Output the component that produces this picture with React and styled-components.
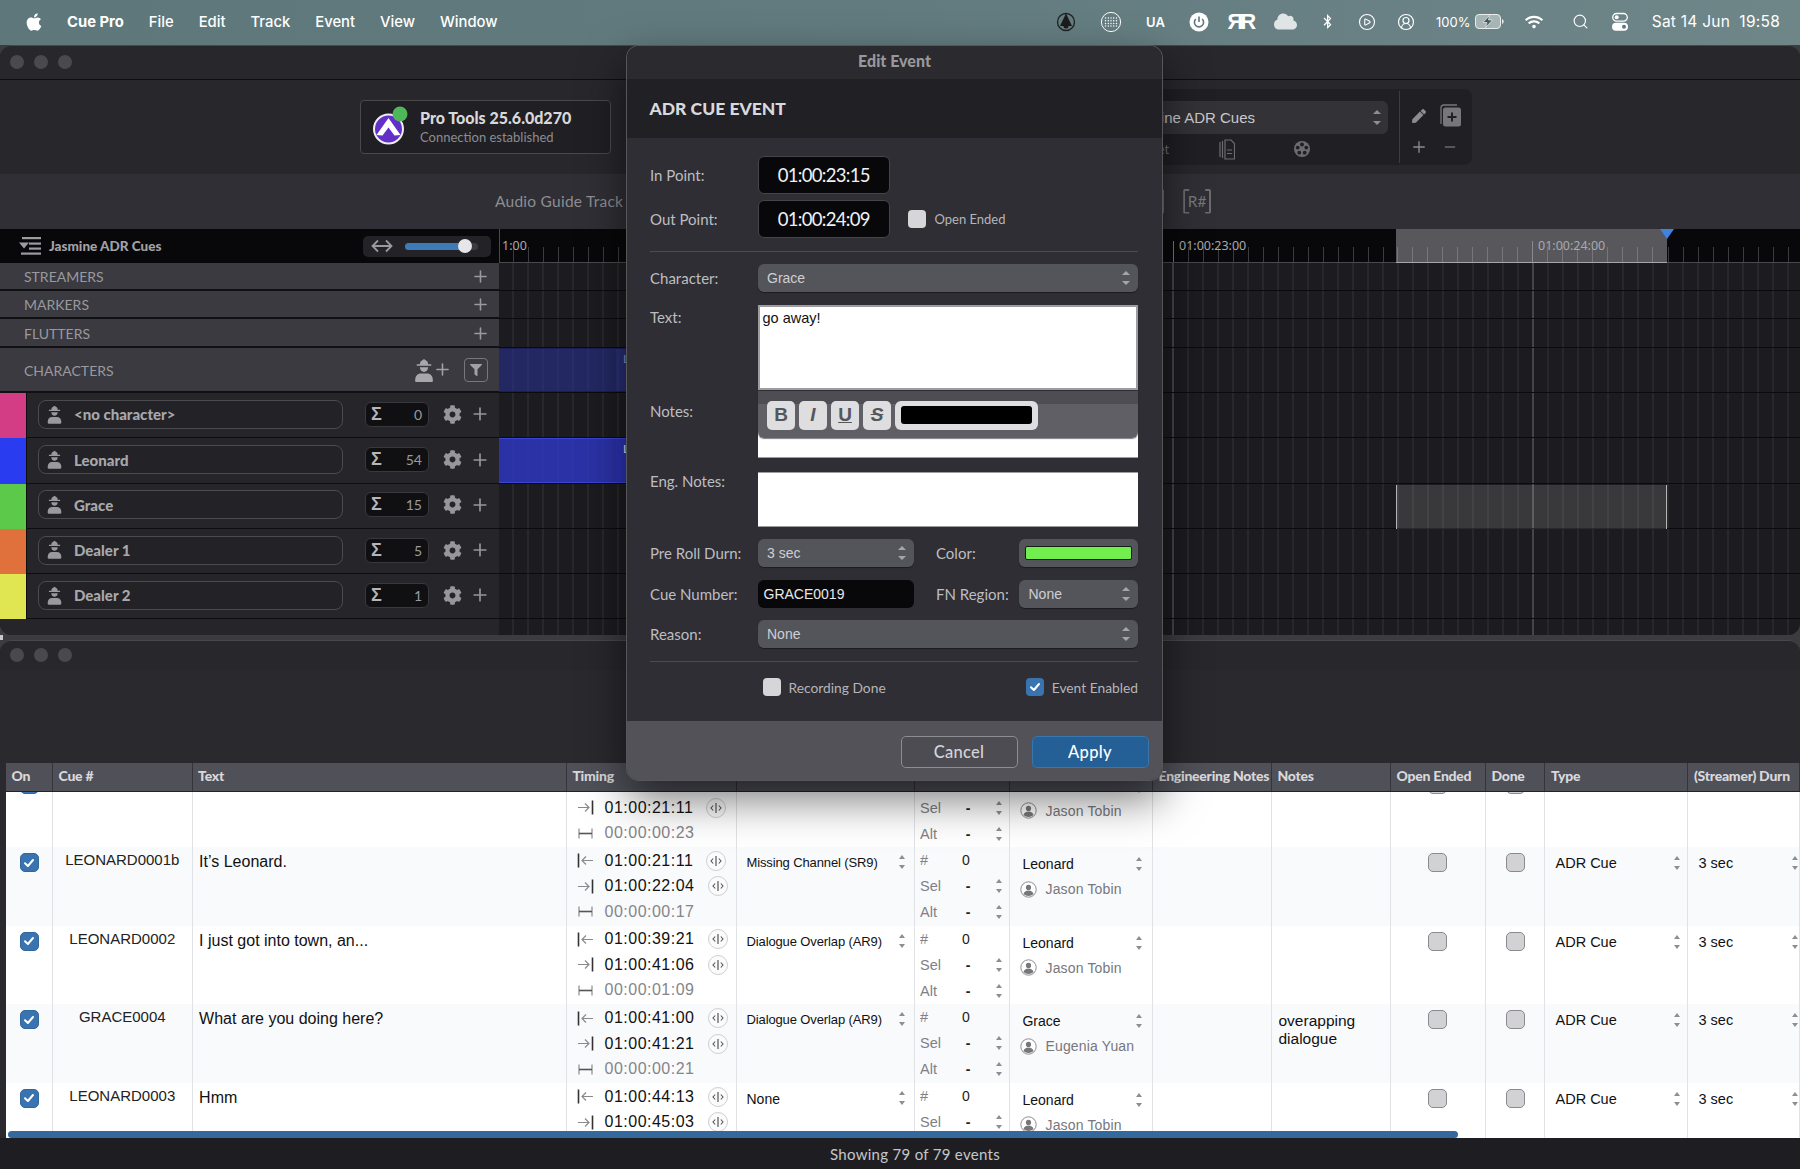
import React from 'react';
import styled, { createGlobalStyle } from 'styled-components';
import { FaApple, FaBluetoothB, FaCloud, FaCog, FaFilter, FaPen, FaWifi } from 'react-icons/fa';
import { CirclePlay, CircleUserRound, Minus, Plus, Search } from 'lucide-react';

const UI = '"Lato", "Noto Sans", sans-serif';
const SANS = '"Liberation Sans", Arial, sans-serif';
const LANES = [28, 28, 29, 45, 45, 45.5, 45, 45.5, 45];
const COLUMNS = '47px 139.6px 374.4px 170px 178px 95px 143px 119px 119px 95px 59.5px 143px 1fr';

const Global = createGlobalStyle`
  html, body { margin: 0; width: 1800px; height: 1169px; overflow: hidden; background: #3b3b40; }
  body { font-family: ${UI}; }
  * { box-sizing: border-box; }
`;

const Screen = styled.div`position: relative; width: 1800px; height: 1169px; overflow: hidden; background: #3b3b40;`;

/* ---------- Menu bar ---------- */
const MenuBar = styled.header`
  height: 45px; display: flex; align-items: center; padding: 0 20px 2px 24px; color: #fff;
  background: linear-gradient(90deg, #5d777b 0%, #627b7f 50%, #6f8689 100%);
  font: 500 14.8px "Inter", sans-serif;
`;
const MenuItems = styled.nav`display: flex; align-items: center; gap: 25px; margin-left: 23px;`;
const AppName = styled.span`font-weight: 700;`;
const Status = styled.div`margin-left: auto; display: flex; align-items: center;`;
const Slot = styled.span`
  width: ${p => p.$w}px; display: flex; justify-content: center; align-items: center;
  font-size: 13px; font-weight: 600;
`;
const Logo = styled.span`font: 700 22px ${SANS}; letter-spacing: -3px; color: #fff; padding-right: 3px;`;
const Percent = styled.span`margin-left: 10px; width: 34px; font-size: 13px; font-weight: 400;`;
const Clock = styled.span`margin-left: 6px; width: 130px; text-align: right; white-space: pre; font-size: 15.5px; letter-spacing: .25px; font-weight: 400;`;

const Ring = () => (
  <svg width="20" height="22" viewBox="0 0 20 22"><circle cx="10" cy="11" r="8.5" fill="none" stroke="#222" strokeWidth="1.3"/><path d="M10 2.500 16 15H4z" fill="#1c1c1c"/><circle cx="10" cy="15" r="2.500" fill="#1c1c1c"/></svg>
);
const DotGlobe = () => (
  <svg width="22" height="22" viewBox="0 0 22 22"><circle cx="11" cy="11" r="9.600" fill="none" stroke="#fff" strokeWidth="1"/>
    {[7, 9.7, 12.4, 15].map(y => [5.5, 8.3, 11, 13.7, 16.5].map(x => <circle key={x + '-' + y} cx={x} cy={y} r=".75" fill="#fff"/>))}
  </svg>
);
const Power = () => (
  <svg width="20" height="20" viewBox="0 0 20 20"><circle cx="10" cy="10" r="9.500" fill="#fff"/><path d="M6.800 7a4.600 4.600 0 1 0 6.400 0M10 4.500V10" fill="none" stroke="#5f777b" strokeWidth="1.600"/></svg>
);
const Battery = () => (
  <svg width="29" height="15" viewBox="0 0 29 15" style={{ marginLeft: 5 }}><rect x=".5" y=".5" width="25" height="14" rx="3.500" fill="#d9dfdf" fillOpacity=".55" stroke="#e8ecec"/><path d="M27 5v5c1-.4 1.700-1.400 1.700-2.500S28 5.400 27 5z" fill="#e8ecec"/><path d="M14.500 1.500 8 8.500h4l-1.500 5 7-7.500h-4z" fill="#42585b" stroke="#fff" strokeWidth=".6"/></svg>
);
const Toggles = () => (
  <svg width="18" height="20" viewBox="0 0 18 20"><rect x="1.700" y="1.500" width="14.600" height="7.600" rx="3.800" fill="none" stroke="#fff" strokeWidth="1.300"/><circle cx="5.700" cy="5.300" r="2" fill="#fff"/><rect x="1" y="10.800" width="16" height="8" rx="4" fill="#fff"/><circle cx="13" cy="14.800" r="2" fill="#5f777b"/></svg>
);

/* ---------- Main window ---------- */
const MainWindow = styled.section`
  height: 590px; display: flex; flex-direction: column; overflow: hidden;
  border-radius: 12px; background: #25252a; border-top: 1px solid #48484c;
`;
const TitleBar = styled.div`
  height: ${p => p.$h}px; flex: none; display: flex; align-items: center; gap: 10px; padding: 0 0 2px 10px;
  background: #27272c; border-bottom: 1px solid ${p => p.$line};
`;
const Light = styled.i`width: 14px; height: 14px; border-radius: 50%; background: #4a4a4e;`;
const Toolbar = styled.div`height: 94px; flex: none; display: flex; align-items: center; background: #27272c;`;
const HostBox = styled.div`
  margin-left: 360px; width: 251px; height: 54px; display: flex; align-items: center; gap: 9px; padding: 0 0 2px 12px;
  background: #1f1f24; border: 1px solid #48484d; border-radius: 4px;
`;
const HostText = styled.div`display: flex; flex-direction: column; gap: 2px;`;
const HostName = styled.strong`font: 900 16px ${UI}; color: #d8d8da; white-space: nowrap;`;
const HostState = styled.span`font: 400 13px ${UI}; color: #8c8c91; white-space: nowrap;`;
const PresetPanel = styled.div`
  margin-left: auto; margin-right: 328px; width: 382px; height: 76px; display: flex;
  background: #1f1f24; border-radius: 8px;
`;
const PresetMain = styled.div`width: 310px; padding: 12px 0 0 12px; border-right: 1px solid #3d3d42; margin: 2px 0;`;
const PresetSelect = styled.div`
  position: relative; width: 286px; height: 33px; margin-top: -2px; display: flex; align-items: center; padding: 0 7px 0 23px; justify-content: space-between;
  background: #323237; border-radius: 6px; font: 15px ${SANS}; color: #c9c9cd;
`;
const PresetTools = styled.div`display: flex; align-items: center; height: 30px; padding-left: 31px; color: #6c6c70; font: 13px ${UI};`;
const PresetIcon = styled.span`display: flex; margin-left: ${p => p.$m}px;`;
const PresetActions = styled.div`
  display: grid; grid-template-columns: 31px 31px; grid-auto-rows: 31px; padding: 11px 0 0 3px;
  place-items: center; color: #8b8b90;
`;
const Band = styled.div`height: 55px; flex: none; display: flex; align-items: center; background: #2f2f35; padding-bottom: 1px;`;
const GuideLabel = styled.span`margin-left: 495px; font: 15.5px ${UI}; letter-spacing: .25px; color: #8d8d92; white-space: nowrap;`;
const BracketButton = styled.div`
  margin-left: ${p => p.$m}px; width: ${p => p.$w}px; height: 25px; display: flex; align-items: center; justify-content: center;
  border: 2px solid #6b6b70; border-radius: 2px; position: relative; color: #77777b; font: 15.5px ${UI};
  clip-path: polygon(0 0, 6px 0, 6px 3px, calc(100% - 6px) 3px, calc(100% - 6px) 0, 100% 0, 100% 100%, calc(100% - 6px) 100%, calc(100% - 6px) calc(100% - 3px), 6px calc(100% - 3px), 6px 100%, 0 100%);
`;
const Workspace = styled.div`flex: 1; display: flex; min-height: 0;`;
const Sidebar = styled.div`width: 499px; flex: none; display: flex; flex-direction: column; background: #25252a;`;
const SideHeader = styled.div`
  height: 34px; flex: none; display: flex; align-items: center; padding-left: 19px; background: #08080a;
  font: 900 13.5px ${UI}; color: #a2a2a6;
`;
const SideTitle = styled.span`margin-left: 8px;`;
const Zoomer = styled.div`
  margin-left: auto; margin-right: 8px; width: 128px; height: 21px; display: flex; align-items: center; padding-left: 8px;
  background: #232327; border-radius: 5px; color: #9a9a9e;
`;
const ZoomTrack = styled.div`position: relative; margin-left: 12px; width: 73px; height: 7px; border-radius: 4px; background: #3a3a3f;`;
const ZoomFill = styled.div`width: 60px; height: 100%; border-radius: 4px; background: #3d7ab8;`;
const ZoomThumb = styled.i`position: absolute; left: 53px; top: -3.5px; width: 14px; height: 14px; border-radius: 50%; background: #e6e6e8;`;
const SectionRow = styled.div`
  height: ${p => p.$h}px; flex: none; display: flex; align-items: center; justify-content: space-between; padding: 1px 9px 0 24px;
  background: #3a3a40; border-bottom: 2px solid #111114; font: 14px ${UI}; color: #99999e;
`;
const SectionTools = styled.div`display: flex; align-items: center; gap: 12px; color: #a0a0a5; padding-right: 2px;`;
const AddPerson = styled.div`display: flex; align-items: center;`;
const FilterBox = styled.div`width: 24px; height: 24px; display: flex; align-items: center; justify-content: center; border: 1.5px solid #77777b; border-radius: 4px;`;
const CharRow = styled.div`height: ${p => p.$h}px; flex: none; display: flex; align-items: center; background: #25252a; border-bottom: 1.5px solid #0e0e10; padding-bottom: 1.5px;`;
const Swatch = styled.div`align-self: stretch; width: 27px; margin: 0 0 -3px; flex: none; background: ${p => p.$c}; border-right: 1px solid #0e0e10;`;
const NamePill = styled.div`
  margin-left: 11px; width: 305px; height: 29px; display: flex; align-items: center; gap: 11px; padding-left: 7px;
  border: 1.5px solid #4b4b50; border-radius: 8px; background: #222227; font: 900 15px ${UI}; color: #a8a8ab;
`;
const CountBox = styled.div`
  margin-left: 22px; width: 64px; height: 25px; display: flex; align-items: center; justify-content: space-between; padding: 0 6px 0 5px;
  background: #101013; border: 1.5px solid #38383d; border-radius: 6px; font: 14px ${UI}; color: #9a9a9e;
`;
const Sigma = styled.b`font: 700 18px ${SANS}; color: #b5b5b8;`;
const RowTools = styled.div`display: flex; align-items: center; margin-left: 14px; gap: 8px; color: #97979b;`;
const SideFill = styled.div`flex: 1; background: #25252a;`;

const Timeline = styled.div`flex: 1; position: relative; min-width: 0; background: #1c1c20;`;
const Ruler = styled.div`
  position: relative; height: 34px; background-color: #08080a; border-bottom: 1px solid #4a4a4e; border-left: 1px solid #4a4a4e;
  background-image:
    linear-gradient(90deg, #77777c 1px, transparent 1px),
    linear-gradient(90deg, #3c3c40 1px, transparent 1px);
  background-size: 360px 21px, 15px 15px;
  background-position: 313px bottom, 13px bottom;
  background-repeat: repeat-x;
`;
const RulerMark = styled.span`position: absolute; left: ${p => p.$x}px; top: 9px; font: 12.5px "Noto Sans", sans-serif; line-height: 16px; color: #a9a9ad; white-space: nowrap;`;
const RulerRange = styled.div`
  position: absolute; left: 896px; width: 271px; top: 0; bottom: -1px; background-color: #58585c; border-bottom: 1px solid #a8a8aa;
  background-image: linear-gradient(90deg, #8a8a8d 1px, transparent 1px), linear-gradient(90deg, #77777a 1px, transparent 1px);
  background-size: 360px 21px, 15px 15px; background-position: 136px bottom, 1px bottom; background-repeat: repeat-x;
`;
const RulerCaret = styled.i`position: absolute; left: 1160px; top: 0; width: 0; height: 0; border: 7px solid transparent; border-top: 10px solid #3f82e0; border-bottom: 0;`;
const Lanes = styled.div`
  position: relative; height: 374px;
  background-image:
    linear-gradient(90deg, rgba(255,255,255,.27) 1px, transparent 1px),
    linear-gradient(90deg, rgba(255,255,255,.1) 1px, transparent 1px);
  background-size: 360px 100%, 15px 100%;
  background-position: 313.5px 0, 13.5px 0;
`;
const Lane = styled.div`position: relative; height: ${p => p.$h}px; border-bottom: 1.5px solid #0b0b0d;`;
const Clip = styled.div`
  position: absolute; left: 0; width: 117px; top: 0; bottom: 0; background: ${p => p.$c};
  border-top: 1.5px solid ${p => p.$edge}; border-bottom: 1.5px solid ${p => p.$edge};
`;
const NextClip = styled.div`
  position: absolute; left: 117px; width: 300px; top: 0; bottom: 0; padding: 2px 0 0 7px; background: ${p => p.$c};
  border-top: 1.5px solid ${p => p.$edge}; border-bottom: 1.5px solid ${p => p.$edge};
  font: 12px ${UI}; color: ${p => p.$ink}; white-space: nowrap;
`;
const RangeBlock = styled.div`
  position: absolute; left: 897px; width: 271px; top: 1px; bottom: -1px; background: rgba(255,255,255,.13);
  border-left: 1px solid #b5b5b8; border-right: 1px solid #b5b5b8;
`;
const LaneFoot = styled.div`height: 18px;`;

/* ---------- Cue list window ---------- */
const Seam = styled.div`height: 5px; background: linear-gradient(90deg, #c9c9cc 0 3px, #3b3b40 3px);`;
const ListWindow = styled.section`
  height: 529px; display: flex; flex-direction: column; overflow: hidden;
  border-radius: 12px 12px 0 0; background: #29292e; border-top: 1px solid #48484c;
`;
const ListGap = styled.div`height: 92px; flex: none; background: #29292e;`;
const TableFrame = styled.div`flex: 1; min-height: 0; margin-left: 6px; position: relative; display: flex; flex-direction: column; background: #fff;`;
const HeadRow = styled.div`
  height: 29px; flex: none; display: grid; grid-template-columns: ${COLUMNS};
  background: #4f5058; border-bottom: 1.5px solid #232327;
`;
const HeadCell = styled.div`
  padding-left: 5.5px; border-right: 1px solid #34343a; font: 900 14px ${UI}; letter-spacing: -.25px; line-height: 26px;
  color: #d8d8dc; white-space: nowrap; overflow: hidden;
`;
const TableBody = styled.div`flex: 1; min-height: 0; overflow: hidden;`;
const TableRows = styled.div`margin-top: -23.5px;`;
const Row = styled.div`height: 78.6px; display: grid; grid-template-columns: ${COLUMNS}; background: ${p => p.$alt ? '#f9fafc' : '#fff'};`;
const Cell = styled.div`
  position: relative; border-right: 1px solid #e1e2e6; color: #111; min-width: 0;
  font: 14px ${SANS}; display: ${p => p.$center ? 'flex' : 'block'}; justify-content: center;
`;
const Box = styled.div`
  width: 19px; height: 19px; flex: none; margin-top: 6px; border-radius: 5px; display: flex; align-items: center; justify-content: center;
  background: ${p => p.$on ? '#3a74b0' : '#d2d2d4'}; border: 1px solid ${p => p.$on ? '#32679c' : '#8b8b8f'};
`;
const CueNumber = styled.div`font-size: 15px; line-height: 18px; padding-top: 4px; text-align: center; color: #222;`;
const CueText = styled.div`font-size: 16px; line-height: 18px; padding: 6px 0 0 6.5px; color: #111;`;
const TimeRow = styled.div`height: 25.5px; display: flex; align-items: center; padding-left: 10px; &:first-child { margin-top: 1px; }`;
const TimeValue = styled.span`margin-left: 10.5px; font: 16px ${SANS}; letter-spacing: .5px; color: ${p => p.$dim ? '#85858a' : '#111'};`;
const Nudge = styled.span`
  margin-left: 13px; width: 20px; height: 20px; flex: none; border-radius: 50%; border: 1px solid #cfcfd3; display: flex; align-items: center; justify-content: center; background: #fbfbfc;
`;
const Select = styled.div`display: flex; align-items: flex-start; justify-content: space-between; padding: ${p => p.$pad};`;
const ReasonText = styled.span`font-size: ${p => p.$fit ? 13 : 14}px; letter-spacing: ${p => p.$fit ? '-.12px' : 0}; line-height: 18px; color: #111; white-space: nowrap;`;
const SelectText = styled.span`font-size: 14.5px; line-height: 18px; color: #111; white-space: nowrap;`;
const TakeRow = styled.div`height: 26px; display: flex; align-items: center; padding: 0 6px 0 5px;`;
const TakeLabel = styled.span`width: 42px; color: #808086; font-size: 14.5px;`;
const TakeValue = styled.span`color: #222; font-size: 14px; font-weight: ${p => p.$bold ? 700 : 400};`;
const TakeStep = styled.span`margin-left: auto; display: flex;`;
const CharName = styled.div`display: flex; justify-content: space-between; align-items: center; height: 20px; margin-top: 7px; padding: 0 8.5px 0 12.5px; font-size: 14px; color: #111;`;
const Actor = styled.div`display: flex; align-items: center; gap: 8px; height: 20px; margin-top: 5px; padding-left: 10.5px; color: #77777c; font-size: 14px; letter-spacing: .15px; white-space: nowrap;`;
const Note = styled.div`font-size: 15.5px; line-height: 17.5px; padding: 8px 6px 0 6.5px; color: #111;`;
const Updown = styled.span`
  display: inline-flex; flex: none; flex-direction: column; justify-content: space-between; width: ${p => p.$w ?? 7}px; height: ${p => p.$h ?? 14}px; margin-top: ${p => p.$t ?? 0}px;
  &::before, &::after { content: ''; width: 0; height: 0; border-left: ${p => (p.$w ?? 7) / 2}px solid transparent; border-right: ${p => (p.$w ?? 7) / 2}px solid transparent; }
  &::before { border-bottom: 4.5px solid ${p => p.$c ?? '#8e8e92'}; }
  &::after { border-top: 4.5px solid ${p => p.$c ?? '#8e8e92'}; }
`;
const Scrollbar = styled.div`position: absolute; left: 2px; bottom: .5px; width: 1450px; height: 7px; border-radius: 4px; background: #34699e;`;
const StatusBar = styled.div`
  height: 31px; flex: none; display: flex; align-items: center; justify-content: center; padding-left: 30px; background: #1e1e22;
  font: 15px ${UI}; letter-spacing: .3px; color: #c6c6ca;
`;

/* ---------- Dialog ---------- */
const Dialog = styled.aside`
  position: absolute; left: 627px; top: 46px; width: 535px; height: 734px; display: flex; flex-direction: column; overflow: hidden;
  border-radius: 12px; background: #2e2e34;
  box-shadow: 0 0 0 1px #56565b, 0 18px 45px rgba(0,0,0,.55);
  font: 15px ${UI}; color: #bdbdc1;
`;
const DialogTitle = styled.div`height: 33px; flex: none; display: flex; align-items: center; justify-content: center; padding-bottom: 4px; background: #2a2a2f; font: 900 16px ${UI}; color: #98989c;`;
const DialogHead = styled.div`height: 59px; flex: none; display: flex; align-items: center; padding-left: 22.5px; background: #202025; font: 900 17.5px ${UI}; color: #d9d9db;`;
const DialogBody = styled.div`flex: 1; padding: 18px 24px 0 23px; display: flex; flex-direction: column;`;
const FormRow = styled.div`display: flex; align-items: ${p => p.$align ?? 'center'}; margin-top: ${p => p.$m ?? 0}px;`;
const FormLabel = styled.label`width: 107.5px; flex: none; padding-top: ${p => p.$pad ?? 0}px; white-space: nowrap; color: #bdbdc1;`;
const Timecode = styled.div`
  width: 132.5px; height: 38px; display: flex; align-items: center; justify-content: center;
  background: #08080a; border: 1px solid #45454a; border-radius: 6px; font: 18.5px ${UI}; letter-spacing: -.7px; color: #f1f1f1;
`;
const CheckLabel = styled.span`font-size: ${p => p.$s ?? 13}px; color: #b5b5b9; white-space: nowrap;`;
const OpenEnded = styled.div`display: flex; align-items: center; gap: 9px; margin-left: 17.5px;`;
const BoxDialog = styled.div`
  width: 18px; height: 18px; flex: none; border-radius: 4px; display: flex; align-items: center; justify-content: center;
  background: ${p => p.$on ? '#3a74b0' : '#d6d6d8'};
`;
const Rule = styled.hr`width: 100%; height: 1px; margin: ${p => p.$m}; border: 0; background: #4b4b50;`;
const DropDown = styled.div`
  flex: ${p => p.$w ? 'none' : 1}; width: ${p => p.$w ? p.$w + 'px' : 'auto'}; height: 28px; display: flex; align-items: center; justify-content: space-between;
  padding: 0 8px 0 9.5px; background: #54555b; border-radius: 6px; box-shadow: 0 1px 1px rgba(0,0,0,.4);
  font: 14px ${SANS}; color: #cfcfd3;
`;
const TextArea = styled.div`
  flex: 1; height: ${p => p.$h}px; background: #fff; border: 2px solid #9d9da1; border-width: ${p => p.$thin ? '1px 0 1px 0' : '2px'};
  padding: 3px 3px; font: 14.5px ${SANS}; color: #111; position: relative;
`;
const Format = styled.div`
  position: absolute; left: 0; right: 0; top: -4px; height: 47px; display: flex; align-items: flex-start; gap: 4px; padding: 10px 0 0 9.5px;
  background: linear-gradient(#4d4d53 0 13px, #5f5f65 13px); border-radius: 0 0 6px 6px; box-shadow: 0 1px 1px rgba(0,0,0,.5);
`;
const FormatButton = styled.div`
  width: 28px; height: 29px; display: flex; align-items: center; justify-content: center; border-radius: 5px; background: #dedee0;
  font: ${p => p.$style ?? '700'} 19px ${SANS}; color: #55555a; text-decoration: ${p => p.$deco ?? 'none'};
`;
const SwatchWell = styled.div`
  width: 143px; height: 29px; padding: 5px 6px; border-radius: 6px; background: #dedee0;
  &::after { content: ''; display: block; height: 18px; border-radius: 3px; background: #000; }
`;
const SmallLabel = styled.label`width: 105px; flex: none; padding-left: 22px; white-space: nowrap; color: #bdbdc1;`;
const ColorWell = styled.div`width: 119px; height: 28px; padding: 7px 6px; border-radius: 6px; background: #54555b; box-shadow: 0 1px 1px rgba(0,0,0,.4);`;
const ColorFill = styled.div`height: 14px; border-radius: 2px; background: #72ee4f; border: 1px solid #10200c;`;
const CueInput = styled.div`width: 156.5px; height: 28px; display: flex; align-items: center; padding-left: 6px; border-radius: 6px; background: #08080a; font: 14px ${SANS}; color: #e8e8e8;`;
const ChecksRow = styled.div`display: flex; justify-content: space-between; padding-left: 112.5px; margin-top: 16px;`;
const CheckItem = styled.div`display: flex; align-items: center; gap: 8px;`;
const DialogFoot = styled.div`height: 59px; flex: none; display: flex; justify-content: flex-end; gap: 14px; padding: 15px 13.5px 0 0; background: #525258;`;
const FootButton = styled.button`
  width: 117px; height: 32px; border-radius: 5px; border: 1px solid ${p => p.$primary ? '#3877ad' : '#8d8d92'}; padding: 0;
  background: ${p => p.$primary ? '#245f96' : '#4c4c52'}; font: 500 16.5px ${UI}; letter-spacing: .3px; color: ${p => p.$primary ? '#fff' : '#d5d5d8'};
`;

/* ---------- Drawn icons ---------- */
const Agent = ({ size = 17, c = '#9a9a9e' }) => (
  <svg width={size} height={size * 1.13} viewBox="0 0 20 24" fill={c} style={{ flex: 'none' }}>
    <path d="M10 1l3.500 2.500L14 6h3v1.600H3V6h3l.5-2.500z"/><path d="M6 9h8c0 2.600-1.700 4.500-4 4.500S6 11.600 6 9z"/>
    <path d="M1.500 21c0-3.500 2.300-6 5.500-6h6c3.200 0 5.500 2.500 5.500 6v1a1.500 1.500 0 0 1-1.500 1.500H3A1.500 1.500 0 0 1 1.500 22z"/>
  </svg>
);
const ListIcon = () => (
  <svg width="22" height="19" viewBox="0 0 22 19" fill="#9c9ca0"><rect x="3" y="0" width="19" height="2.200"/><path d="M0 5.500h10l-5 6z"/><rect x="10" y="5.500" width="12" height="2.200"/><rect x="10" y="10.500" width="12" height="2.200"/><rect x="2" y="15.500" width="20" height="2.200"/></svg>
);
const ProToolsMark = () => (
  <svg width="38" height="42" viewBox="0 0 38 42" style={{ flex: 'none' }}>
    <circle cx="15.500" cy="24" r="14.500" fill="#6230c8" stroke="#eee" strokeWidth="2"/>
    <path d="M3.500 30 15.500 13l12 17-6 .5-6-8-6 8z" fill="#fff"/>
    <circle cx="27" cy="9" r="7.500" fill="#4fb75a"/>
  </svg>
);
const CopyPlus = () => (
  <svg width="22" height="23" viewBox="0 0 22 23"><path d="M2 20V4a3 3 0 0 1 3-3h13" fill="none" stroke="#77777b" strokeWidth="1.300"/><rect x="4" y="3.500" width="18" height="19" rx="2.500" fill="#77777b"/><path d="M13 8.500v9M8.500 13h9" stroke="#1f1f24" strokeWidth="2"/></svg>
);
const FileStack = () => (
  <svg width="16" height="21" viewBox="0 0 16 21" fill="none" stroke="#6c6c70" strokeWidth="1.200"><path d="M1 3v15M3.500 2v17"/><path d="M6 1h6l3.500 3.500V20H6zM8 11h5M8 14.500h5"/></svg>
);
const Reel = () => (
  <svg width="16" height="16" viewBox="0 0 16 16"><circle cx="8" cy="8" r="8" fill="#6c6c70"/>{[[8, 3.5], [12.3, 6.6], [10.7, 11.7], [5.3, 11.7], [3.7, 6.6]].map(([x, y]) => <circle key={x} cx={x} cy={y} r="1.900" fill="#1f1f24"/>)}</svg>
);
const Check = ({ size = 12 }) => (
  <svg width={size} height={size} viewBox="0 0 12 12"><path d="M2 6.300 4.900 9 10 3" fill="none" stroke="#fff" strokeWidth="2" strokeLinecap="round" strokeLinejoin="round"/></svg>
);
const InMark = () => (
  <svg width="17" height="15" viewBox="0 0 17 15" fill="none" style={{ flex: 'none' }}><path d="M1.500 .5v14" stroke="#333" strokeWidth="1.600"/><path d="M9 3.500 5 7.500l4 4M5.500 7.500H16" stroke="#8a8a8e" strokeWidth="1.200"/></svg>
);
const OutMark = () => (
  <svg width="17" height="15" viewBox="0 0 17 15" fill="none" style={{ flex: 'none' }}><path d="M15.500 .5v14" stroke="#333" strokeWidth="1.600"/><path d="M8 3.500l4 4-4 4M1 7.500h10.500" stroke="#8a8a8e" strokeWidth="1.200"/></svg>
);
const DurMark = () => (
  <svg width="17" height="15" viewBox="0 0 17 15" fill="none" style={{ flex: 'none' }}><path d="M2 2.500v10M15 2.500v10" stroke="#8a8a8e" strokeWidth="1.200"/><path d="M2 7.500h13" stroke="#55555a" strokeWidth="1.600"/></svg>
);
const NudgeMark = () => (
  <svg width="14" height="14" viewBox="0 0 14 14" fill="none"><path d="M7 2v10" stroke="#444" strokeWidth="1.100"/><path d="M4.200 4.500 2 7l2.200 2.500M9.800 4.500 12 7l-2.200 2.500" stroke="#555" strokeWidth="1.100"/></svg>
);
const ActorMark = () => (
  <svg width="17" height="17" viewBox="0 0 17 17" style={{ flex: 'none' }}><circle cx="8.500" cy="8.500" r="7.700" fill="#fff" stroke="#8c8c90"/><circle cx="8.500" cy="6.400" r="2.600" fill="#77777b"/><path d="M3.500 13c.5-2.300 2.500-3.500 5-3.500s4.500 1.200 5 3.500c-1.300 1.300-3 2-5 2s-3.700-.7-5-2z" fill="#77777b"/></svg>
);

/* ---------- Data ---------- */
const CHARACTERS = [
  { name: '<no character>', count: 0, color: '#d33d85' },
  { name: 'Leonard', count: 54, color: '#2a3cf0' },
  { name: 'Grace', count: 15, color: '#5cc94a' },
  { name: 'Dealer 1', count: 5, color: '#e0703c' },
  { name: 'Dealer 2', count: 1, color: '#dfe651' },
];
const HEADS = ['On', 'Cue #', 'Text', 'Timing', 'Reason', 'Takes', 'Character', 'Engineering Notes', 'Notes', 'Open Ended', 'Done', 'Type', '(Streamer) Durn'];
const CUES = [
  { cue: '', text: '', tin: '01:00:20:12', tout: '01:00:21:11', dur: '00:00:00:23', reason: 'Missing Channel (SR9)', who: 'Leonard', actor: 'Jason Tobin' },
  { cue: 'LEONARD0001b', text: 'It’s Leonard.', tin: '01:00:21:11', tout: '01:00:22:04', dur: '00:00:00:17', reason: 'Missing Channel (SR9)', who: 'Leonard', actor: 'Jason Tobin' },
  { cue: 'LEONARD0002', text: 'I just got into town, an...', tin: '01:00:39:21', tout: '01:00:41:06', dur: '00:00:01:09', reason: 'Dialogue Overlap (AR9)', who: 'Leonard', actor: 'Jason Tobin' },
  { cue: 'GRACE0004', text: 'What are you doing here?', tin: '01:00:41:00', tout: '01:00:41:21', dur: '00:00:00:21', reason: 'Dialogue Overlap (AR9)', who: 'Grace', actor: 'Eugenia Yuan', note: 'overapping dialogue' },
  { cue: 'LEONARD0003', text: 'Hmm', tin: '01:00:44:13', tout: '01:00:45:03', dur: '00:00:00:14', reason: 'None', who: 'Leonard', actor: 'Jason Tobin' },
];

const CueRow = ({ c, alt }) => (
  <Row $alt={alt}>
    <Cell $center><Box $on><Check /></Box></Cell>
    <Cell><CueNumber>{c.cue}</CueNumber></Cell>
    <Cell><CueText>{c.text}</CueText></Cell>
    <Cell>
      <TimeRow><InMark /><TimeValue>{c.tin}</TimeValue><Nudge><NudgeMark /></Nudge></TimeRow>
      <TimeRow><OutMark /><TimeValue>{c.tout}</TimeValue><Nudge><NudgeMark /></Nudge></TimeRow>
      <TimeRow><DurMark /><TimeValue $dim>{c.dur}</TimeValue></TimeRow>
    </Cell>
    <Cell>
      <Select $pad="7px 8px 0 9.5px"><ReasonText $fit={c.reason !== 'None'}>{c.reason}</ReasonText><Updown $t={1} /></Select>
    </Cell>
    <Cell>
      <TakeRow><TakeLabel>#</TakeLabel><TakeValue>0</TakeValue></TakeRow>
      <TakeRow><TakeLabel>Sel</TakeLabel><TakeValue $bold>&nbsp;-</TakeValue><TakeStep><Updown /></TakeStep></TakeRow>
      <TakeRow><TakeLabel>Alt</TakeLabel><TakeValue $bold>&nbsp;-</TakeValue><TakeStep><Updown /></TakeStep></TakeRow>
    </Cell>
    <Cell>
      <CharName>{c.who}<Updown /></CharName>
      <Actor><ActorMark />{c.actor}</Actor>
    </Cell>
    <Cell />
    <Cell>{c.note && <Note>{c.note}</Note>}</Cell>
    <Cell $center><Box /></Cell>
    <Cell $center><Box /></Cell>
    <Cell><Select $pad="7px 6px 0 10px"><SelectText>ADR Cue</SelectText><Updown $t={2} /></Select></Cell>
    <Cell><Select $pad="7px 0 0 10px"><SelectText>3 sec</SelectText><Updown $t={2} /></Select></Cell>
  </Row>
);

export default function App() {
  return (
    <Screen>
      <Global />
      <MenuBar>
        <FaApple size={20} />
        <MenuItems>
          <AppName>Cue Pro</AppName>
          {['File', 'Edit', 'Track', 'Event', 'View', 'Window'].map(m => <span key={m}>{m}</span>)}
        </MenuItems>
        <Status>
          <Slot $w={45}><Ring /></Slot>
          <Slot $w={45}><DotGlobe /></Slot>
          <Slot $w={44}>UA</Slot>
          <Slot $w={42.5}><Power /></Slot>
          <Slot $w={43.5}><Logo>ЯR</Logo></Slot>
          <Slot $w={44}><FaCloud size={23} color="#dfe4e4" /></Slot>
          <Slot $w={40.5}><FaBluetoothB size={15} /></Slot>
          <Slot $w={38.5}><CirclePlay size={18} strokeWidth={1.5} /></Slot>
          <Slot $w={39.5}><CircleUserRound size={18} strokeWidth={1.6} /></Slot>
          <Percent>100%</Percent>
          <Battery />
          <Slot $w={60}><FaWifi size={18} /></Slot>
          <Slot $w={32}><Search size={17} strokeWidth={1.6} /></Slot>
          <Slot $w={48}><Toggles /></Slot>
          <Clock>{'Sat 14 Jun  19:58'}</Clock>
        </Status>
      </MenuBar>

      <MainWindow>
        <TitleBar $h={34} $line="#0e0e10"><Light /><Light /><Light /></TitleBar>
        <Toolbar>
          <HostBox>
            <ProToolsMark />
            <HostText><HostName>Pro Tools 25.6.0d270</HostName><HostState>Connection established</HostState></HostText>
          </HostBox>
          <PresetPanel>
            <PresetMain>
              <PresetSelect>Jasmine ADR Cues<Updown $w={8} $h={15} $c="#8e8e92" /></PresetSelect>
              <PresetTools>
                Preset
                <PresetIcon $m={50}><FileStack /></PresetIcon>
                <PresetIcon $m={59}><Reel /></PresetIcon>
              </PresetTools>
            </PresetMain>
            <PresetActions>
              <FaPen size={14} />
              <CopyPlus />
              <Plus size={18} strokeWidth={1.8} />
              <Minus size={16} strokeWidth={1.8} />
            </PresetActions>
          </PresetPanel>
        </Toolbar>
        <Band>
          <GuideLabel>Audio Guide Track</GuideLabel>
          <BracketButton $m={507} $w={34} />
          <BracketButton $m={19} $w={28}>R#</BracketButton>
        </Band>
        <Workspace>
          <Sidebar>
            <SideHeader>
              <ListIcon />
              <SideTitle>Jasmine ADR Cues</SideTitle>
              <Zoomer>
                <svg width="22" height="14" viewBox="0 0 22 14" fill="none" stroke="currentColor" strokeWidth="1.800"><path d="M1.500 7h19M7 1.500 1.500 7 7 12.500M15 1.500 20.500 7 15 12.500"/></svg>
                <ZoomTrack><ZoomFill /><ZoomThumb /></ZoomTrack>
              </Zoomer>
            </SideHeader>
            <SectionRow $h={LANES[0]}>STREAMERS<Plus size={19} strokeWidth={2} /></SectionRow>
            <SectionRow $h={LANES[1]}>MARKERS<Plus size={19} strokeWidth={2} /></SectionRow>
            <SectionRow $h={LANES[2]}>FLUTTERS<Plus size={19} strokeWidth={2} /></SectionRow>
            <SectionRow $h={LANES[3]}>
              CHARACTERS
              <SectionTools>
                <AddPerson><Agent size={22} c="#a8a8ac" /><Plus size={19} strokeWidth={2} style={{ marginLeft: -2 }} /></AddPerson>
                <FilterBox><FaFilter size={12} /></FilterBox>
              </SectionTools>
            </SectionRow>
            {CHARACTERS.map((c, i) => (
              <CharRow key={c.name} $h={LANES[4 + i]}>
                <Swatch $c={c.color} />
                <NamePill><Agent />{c.name}</NamePill>
                <CountBox><Sigma>Σ</Sigma>{c.count}</CountBox>
                <RowTools><FaCog size={19} /><Plus size={20} strokeWidth={2} /></RowTools>
              </CharRow>
            ))}
            <SideFill />
          </Sidebar>
          <Timeline>
            <Ruler>
              <RulerMark $x={2}>1:00</RulerMark>
              <RulerMark $x={679}>01:00:23:00</RulerMark>
              <RulerRange />
              <RulerMark $x={1038}>01:00:24:00</RulerMark>
              <RulerCaret />
            </Ruler>
            <Lanes>
              {LANES.map((h, i) => (
                <Lane key={i} $h={h}>
                  {i === 3 && <><Clip $c="rgba(40,48,140,.62)" $edge="#1a1f5a" /><NextClip $c="rgba(44,52,150,.7)" $edge="#1a1f5a" $ink="#8d93c9">Leonard</NextClip></>}
                  {i === 5 && <><Clip $c="rgba(46,54,190,.85)" $edge="#3a45d6" /><NextClip $c="#2b33b4" $edge="#3a45d6" $ink="#e6e6f4">Leonard</NextClip></>}
                  {i === 6 && <RangeBlock />}
                </Lane>
              ))}
              <LaneFoot />
            </Lanes>
          </Timeline>
        </Workspace>
      </MainWindow>

      <Seam />

      <ListWindow>
        <TitleBar $h={30} $line="#29292e"><Light /><Light /><Light /></TitleBar>
        <ListGap />
        <TableFrame>
          <HeadRow>{HEADS.map(h => <HeadCell key={h}>{h}</HeadCell>)}</HeadRow>
          <TableBody>
            <TableRows>{CUES.map((c, i) => <CueRow key={i} c={c} alt={i % 2 === 1} />)}</TableRows>
          </TableBody>
          <Scrollbar />
        </TableFrame>
        <StatusBar>Showing 79 of 79 events</StatusBar>
      </ListWindow>

      <Dialog>
        <DialogTitle>Edit Event</DialogTitle>
        <DialogHead>ADR CUE EVENT</DialogHead>
        <DialogBody>
          <FormRow><FormLabel>In Point:</FormLabel><Timecode>01:00:23:15</Timecode></FormRow>
          <FormRow $m={6}>
            <FormLabel>Out Point:</FormLabel><Timecode>01:00:24:09</Timecode>
            <OpenEnded><BoxDialog /><CheckLabel>Open Ended</CheckLabel></OpenEnded>
          </FormRow>
          <Rule $m="12.5px 0 12px" />
          <FormRow><FormLabel>Character:</FormLabel><DropDown>Grace<Updown $w={8} $h={14} $c="#a5a5a9" /></DropDown></FormRow>
          <FormRow $m={13} $align="flex-start">
            <FormLabel $pad={3}>Text:</FormLabel><TextArea $h={85}>go away!</TextArea>
          </FormRow>
          <FormRow $m={4} $align="flex-start">
            <FormLabel $pad={8}>Notes:</FormLabel>
            <TextArea $h={64} $thin>
              <Format>
                <FormatButton>B</FormatButton>
                <FormatButton $style="italic 700">I</FormatButton>
                <FormatButton $deco="underline">U</FormatButton>
                <FormatButton $style="italic 700" $deco="line-through">S</FormatButton>
                <SwatchWell />
              </Format>
            </TextArea>
          </FormRow>
          <FormRow $m={14.5} $align="flex-start">
            <FormLabel>Eng. Notes:</FormLabel><TextArea $h={55} $thin />
          </FormRow>
          <FormRow $m={12}>
            <FormLabel>Pre Roll Durn:</FormLabel>
            <DropDown $w={156.5}>3 sec<Updown $w={8} $h={14} $c="#a5a5a9" /></DropDown>
            <SmallLabel>Color:</SmallLabel>
            <ColorWell><ColorFill /></ColorWell>
          </FormRow>
          <FormRow $m={13}>
            <FormLabel>Cue Number:</FormLabel>
            <CueInput>GRACE0019</CueInput>
            <SmallLabel>FN Region:</SmallLabel>
            <DropDown $w={119}>None<Updown $w={8} $h={14} $c="#a5a5a9" /></DropDown>
          </FormRow>
          <FormRow $m={12}><FormLabel>Reason:</FormLabel><DropDown>None<Updown $w={8} $h={14} $c="#a5a5a9" /></DropDown></FormRow>
          <Rule $m="13px 0 0" />
          <ChecksRow>
            <CheckItem><BoxDialog /><CheckLabel $s={13.8}>Recording Done</CheckLabel></CheckItem>
            <CheckItem><BoxDialog $on><Check /></BoxDialog><CheckLabel $s={13.8}>Event Enabled</CheckLabel></CheckItem>
          </ChecksRow>
        </DialogBody>
        <DialogFoot>
          <FootButton>Cancel</FootButton>
          <FootButton $primary>Apply</FootButton>
        </DialogFoot>
      </Dialog>
    </Screen>
  );
}
